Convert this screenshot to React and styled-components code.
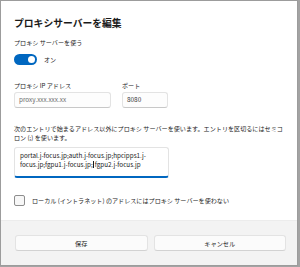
import React from 'react';
import styled, { createGlobalStyle } from 'styled-components';

const GlobalStyle = createGlobalStyle`
  html, body {
    margin: 0;
    padding: 0;
    background: #a3a3a3;
  }
  body {
    font-family: "Noto Sans CJK JP", "Noto Sans", sans-serif;
    color: #1b1b1b;
  }
`;

const Dialog = styled.div`
  box-sizing: border-box;
  width: 298px;
  height: 266px;
  background: #ffffff;
  border: 1px solid #9c9c9c;
  display: flex;
  flex-direction: column;
`;

const Content = styled.div`
  flex: 1;
  padding: 15px 0 0 13px;
  display: flex;
  flex-direction: column;
`;

const Title = styled.h1`
  margin: 0;
  font-size: 9.8px;
  line-height: 14px;
  font-weight: 700;
  color: #1a1a1a;
`;

const Label = styled.div`
  font-size: 6.1px;
  line-height: 9px;
  color: #1b1b1b;
  margin-top: ${p => p.$top || 0}px;
  white-space: nowrap;
`;

const ToggleRow = styled.div`
  display: flex;
  align-items: center;
  gap: 7px;
  margin-top: 7px;
  height: 11px;
`;

const Toggle = styled.div`
  box-sizing: border-box;
  width: 23px;
  height: 11px;
  border-radius: 6px;
  background: #0067c0;
  display: flex;
  align-items: center;
  justify-content: flex-end;
  padding-right: 2px;
`;

const Knob = styled.div`
  width: 7px;
  height: 7px;
  border-radius: 50%;
  background: #ffffff;
`;

const ToggleText = styled.span`
  font-size: 6.1px;
  line-height: 9px;
`;

const FieldRow = styled.div`
  display: flex;
  gap: 11px;
  margin-top: 16px;
`;

const Field = styled.div`
  display: flex;
  flex-direction: column;
  gap: 2px;
`;

const Input = styled.div`
  box-sizing: border-box;
  width: ${p => p.$width}px;
  height: 16px;
  border: 1px solid #e3e3e3;
  border-bottom-color: #c8c8c8;
  border-radius: 3px;
  background: #fdfdfd;
  font-size: 6.4px;
  line-height: 14px;
  padding: 0 4px;
  color: ${p => (p.$placeholder ? '#6a6a6a' : '#333333')};
`;

const Paragraph = styled.p`
  margin: 17px 0 0;
  font-size: 6.1px;
  line-height: 8.7px;
  width: 283px;
  white-space: nowrap;
`;

const TextArea = styled.div`
  box-sizing: border-box;
  width: 155px;
  height: 31px;
  margin-top: 5px;
  border: 1px solid #e3e3e3;
  border-bottom: 2px solid #0067c0;
  border-radius: 3px;
  background: #ffffff;
  padding: 4px 5px 0;
  font-size: 6.3px;
  line-height: 8.3px;
  color: #1a1a1a;
  white-space: nowrap;
`;

const Caret = styled.span`
  display: inline-block;
  width: 0;
  height: 7px;
  border-left: 1px solid #1a1a1a;
  vertical-align: -1px;
  margin: 0 0.5px;
`;

const CheckRow = styled.label`
  display: flex;
  align-items: center;
  gap: 7px;
  margin-top: 17px;
`;

const CheckBox = styled.span`
  box-sizing: border-box;
  width: 11px;
  height: 11px;
  border: 1px solid #8d8d8d;
  border-radius: 2px;
  background: #f7f7f7;
`;

const CheckText = styled.span`
  font-size: 6.1px;
  line-height: 9px;
`;

const Footer = styled.div`
  box-sizing: border-box;
  height: 45px;
  background: #f3f3f3;
  border-top: 1px solid #ececec;
  padding: 14px 11px 0 14px;
  display: grid;
  grid-template-columns: 1fr 1fr;
  gap: 6px;
  align-items: start;
`;

const Button = styled.button`
  box-sizing: border-box;
  height: 16px;
  border: 1px solid #e3e3e3;
  border-bottom-color: #d2d2d2;
  border-radius: 3px;
  background: #fbfbfb;
  font-family: inherit;
  font-size: 6.2px;
  color: #1b1b1b;
  padding: 0;
`;

export default function App() {
  return (
    <>
      <GlobalStyle />
      <Dialog>
        <Content>
          <Title>プロキシサーバーを編集</Title>
          <Label $top={8}>プロキシ サーバーを使う</Label>
          <ToggleRow>
            <Toggle><Knob /></Toggle>
            <ToggleText>オン</ToggleText>
          </ToggleRow>
          <FieldRow>
            <Field>
              <Label>プロキシ IP アドレス</Label>
              <Input $width={97} $placeholder>proxy.xxx.xxx.xx</Input>
            </Field>
            <Field>
              <Label>ポート</Label>
              <Input $width={46}>8080</Input>
            </Field>
          </FieldRow>
          <Paragraph>
            次のエントリで始まるアドレス以外にプロキシ サーバーを使います。エントリを区切るにはセミコ
            <br />
            ロン (;) を使います。
          </Paragraph>
          <TextArea>
            portal.j-focus.jp;auth.j-focus.jp;hpcipps1.j-
            <br />
            focus.jp;fgpu1.j-focus.jp;<Caret />fgpu2.j-focus.jp
          </TextArea>
          <CheckRow>
            <CheckBox />
            <CheckText>ローカル (イントラネット) のアドレスにはプロキシ サーバーを使わない</CheckText>
          </CheckRow>
        </Content>
        <Footer>
          <Button>保存</Button>
          <Button>キャンセル</Button>
        </Footer>
      </Dialog>
    </>
  );
}
